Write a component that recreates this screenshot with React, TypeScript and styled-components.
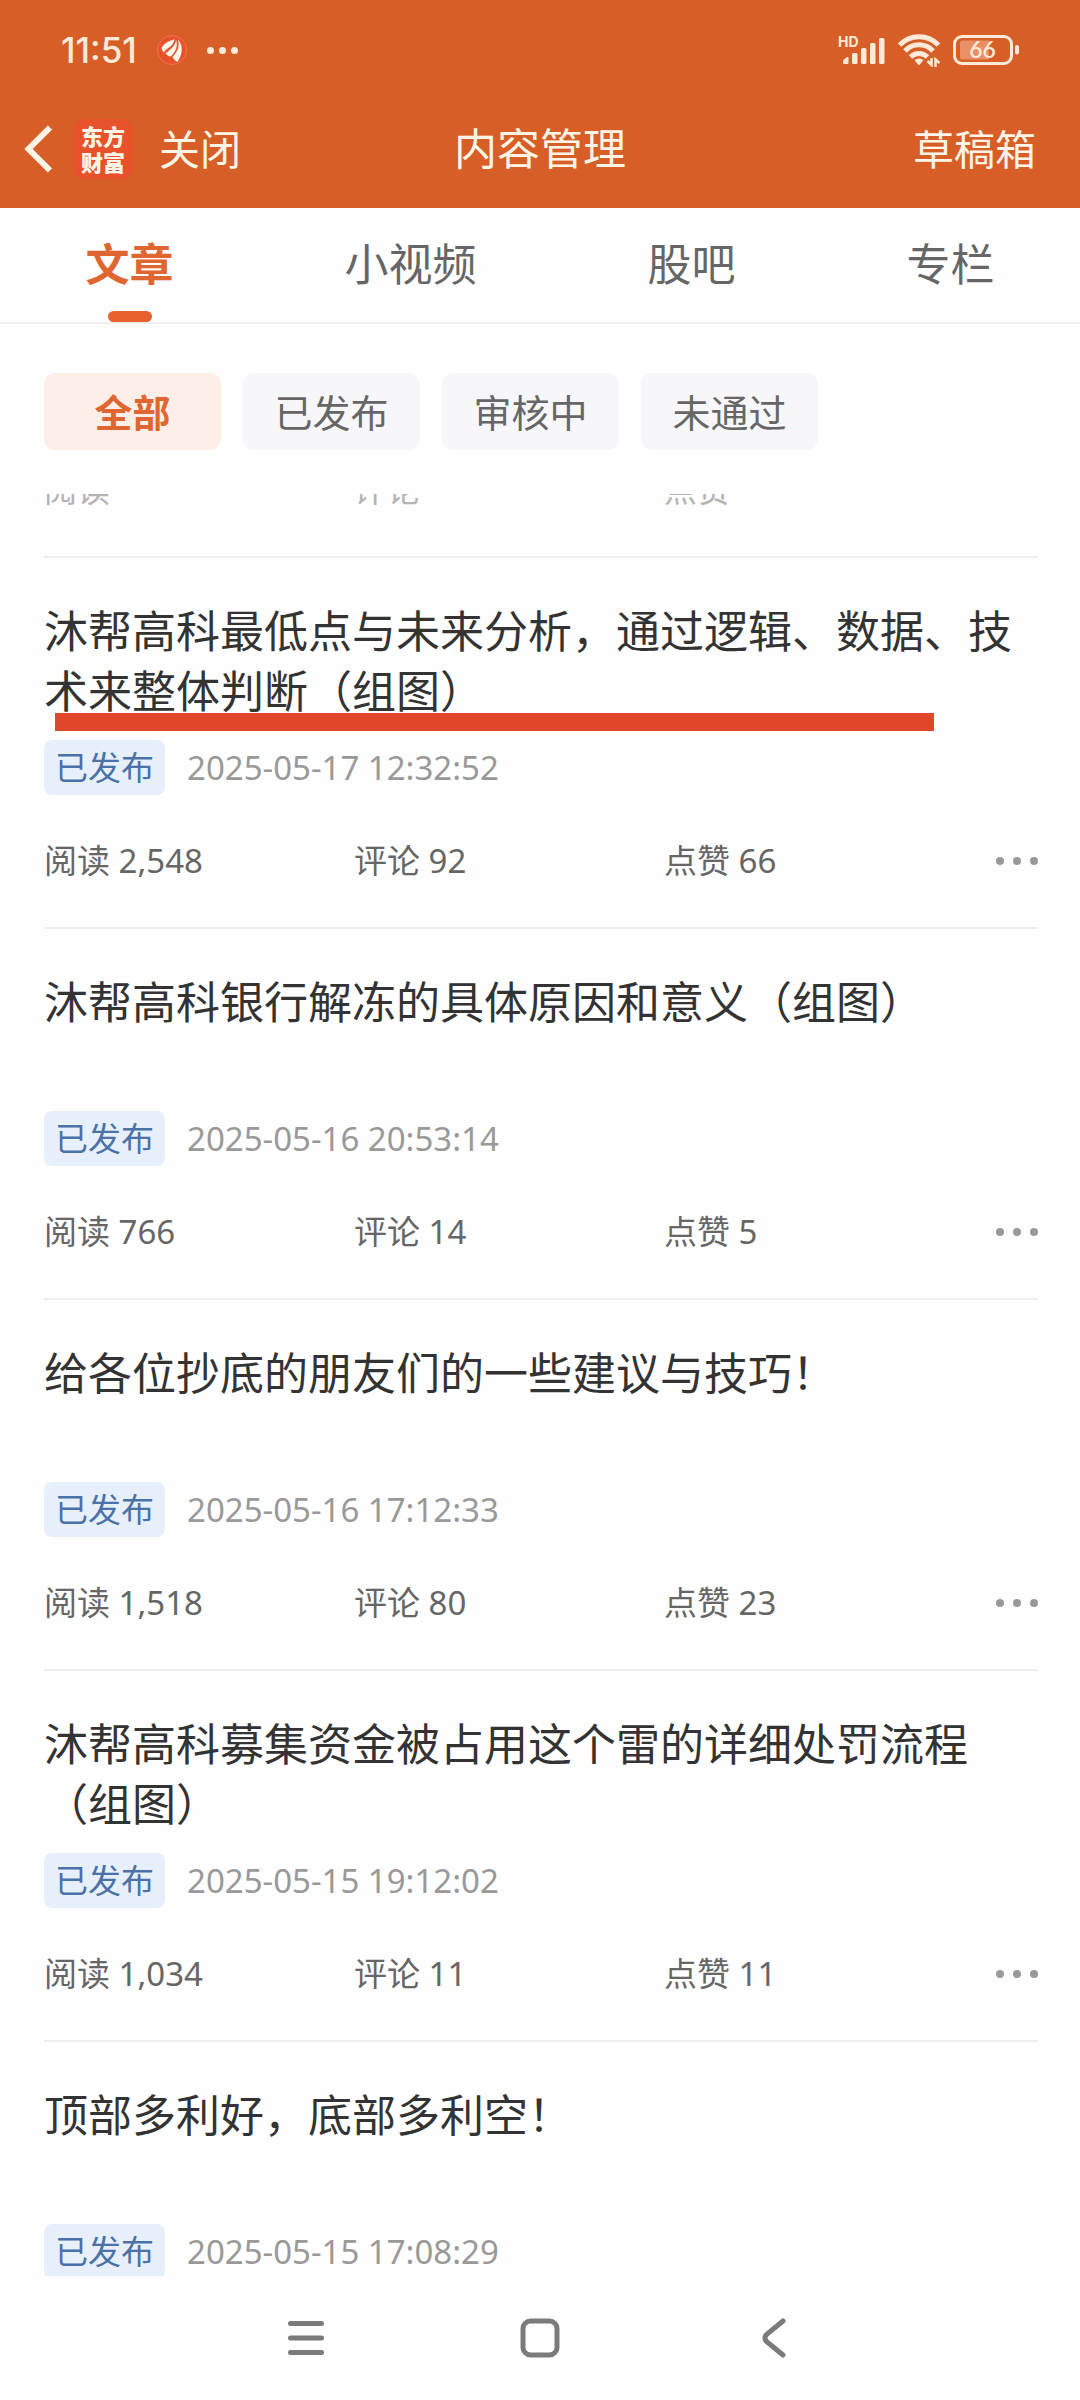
import React from "react";
import styled, { createGlobalStyle } from "styled-components";

const GlobalStyle = createGlobalStyle`
  *, *::before, *::after { box-sizing: border-box; }
  body { margin: 0; background: #fefefe; }
  button {
    margin: 0;
    padding: 0;
    border: 0;
    background: none;
    font: inherit;
    color: inherit;
    cursor: pointer;
  }
  svg { display: block; }
`;

const Page = styled.div`
  display: flex;
  flex-direction: column;
  height: 100vh;
  background: #fefefe;
  color: #333;
  font-family: "Noto Sans", "Noto Sans CJK SC", sans-serif;
  font-size: 33px;
`;

const TopArea = styled.div`
  background: #d75f27;
  color: #fff5e6;
`;

const StatusBar = styled.div`
  display: flex;
  align-items: center;
  justify-content: space-between;
  height: 90px;
  padding: 10px 60px 0 61px;
  color: #ffe9d9;
  font-family: Inter, sans-serif;
`;

const StatusGroup = styled.div<{ $gap: number }>`
  display: flex;
  align-items: center;
  gap: ${(p) => p.$gap}px;
`;

const Clock = styled.span`
  font-size: 35px;
  font-weight: 500;
  line-height: 40px;
`;

const NavBar = styled.header`
  display: grid;
  grid-template-columns: 1fr auto 1fr;
  align-items: center;
  height: 118px;
  padding: 0 24px;
  font-size: 41px;
  line-height: 60px;
`;

const NavLeft = styled.div`
  display: flex;
  align-items: center;
`;

const BackButton = styled.button`
  margin-right: 21px;
`;

const BrandLogo = styled.span`
  display: grid;
  place-content: center;
  width: 60px;
  height: 60px;
  margin-right: 26px;
  border-radius: 12px;
  background: #e8522a;
  font-size: 22px;
  font-weight: 900;
  line-height: 26px;
`;

const PageTitle = styled.h1`
  margin: 0;
  font-size: 43px;
  font-weight: 400;
`;

const DraftsButton = styled.button`
  justify-self: end;
  padding-right: 20px;
`;

const Tabs = styled.nav`
  display: flex;
  justify-content: space-around;
  height: 116px;
  border-bottom: 2px solid #eee;
`;

const Tab = styled.button<{ $active: boolean }>`
  display: flex;
  flex-direction: column;
  align-items: center;
  gap: 16px;
  padding-top: 25px;
  color: ${(p) => (p.$active ? "#df6631" : "#666")};
  font-size: 44px;
  font-weight: ${(p) => (p.$active ? 700 : 400)};
  line-height: 62px;

  &::after {
    content: "";
    width: 44px;
    height: 11px;
    border-radius: 6px;
    background: ${(p) => (p.$active ? "#e8622e" : "transparent")};
  }
`;

const Filters = styled.div`
  display: flex;
  gap: 22px;
  padding: 49px 44px 44px;
`;

const Filter = styled.button<{ $active: boolean }>`
  width: 177px;
  height: 77px;
  border-radius: 11px;
  background: ${(p) => (p.$active ? "#fdeee7" : "#f7f7fa")};
  color: ${(p) => (p.$active ? "#df6631" : "#666")};
  font-size: 38px;
  font-weight: ${(p) => (p.$active ? 700 : 400)};
  line-height: 56px;
`;

const List = styled.main`
  flex: 1;
  min-height: 0;
  padding: 0 42px 0 44px;
  overflow: hidden;
`;

const Item = styled.article`
  position: relative;
  padding: 43px 0;
  border-bottom: 2px solid #eee;
`;

const ScrolledItem = styled.article`
  margin-top: -27px;
  padding-bottom: 43px;
  border-bottom: 2px solid #eee;
  color: #b4b4b4;
`;

const ItemTitle = styled.h2`
  min-height: 120px;
  margin: 0 0 19px;
  font-size: 44px;
  font-weight: 400;
  line-height: 60px;
`;

const Meta = styled.div`
  display: flex;
  align-items: center;
  gap: 22px;
  color: #999;
`;

const Badge = styled.span`
  padding: 0 11px;
  border-radius: 8px;
  background: #e7f0fa;
  color: #4a72a8;
  line-height: 55px;
`;

const Stats = styled.div`
  display: grid;
  grid-template-columns: repeat(3, 1fr) 64px;
  align-items: center;
  line-height: 46px;
`;

const ItemStats = styled(Stats)`
  margin-top: 43px;
  color: #666;
`;

const MoreButton = styled.button`
  justify-self: end;
`;

const Marker = styled.span`
  position: absolute;
  top: 155px;
  left: 11px;
  right: 104px;
  height: 18px;
  background: #e1462b;
`;

const SystemNav = styled.footer`
  display: flex;
  justify-content: center;
  height: 124px;
`;

const SystemButton = styled.button`
  display: grid;
  place-items: center;
  width: 234px;
`;

const AppGlyph = () => (
  <svg width="30" height="30" viewBox="0 0 30 30" aria-hidden="true">
    <circle cx="15" cy="15" r="14.500" fill="#e8512b" stroke="#ee7450" />
    <g fill="#fff6ec">
      <path d="M17.500 4C14 6 8 6.500 4.500 13Q5 16 7 17.500Q9 14 12 12.500C15 10.500 17 8 17.500 4Z" />
      <path d="M19 4.500C19 9.500 14.500 14 8.500 18.500Q10.500 21 13.500 21.500C18 17.500 21.500 12 19 4.500Z" />
      <path d="M21 4.500C23 12 20 17 15.500 22Q17 25.500 20.500 27C24.500 21 27.500 12 21 4.500Z" />
    </g>
  </svg>
);

const Dots = ({ size, pitch, color }: { size: number; pitch: number; color: string }) => (
  <svg width={size + pitch * 2} height={size} aria-hidden="true" fill={color}>
    {[0, 1, 2].map((i) => (
      <circle key={i} cx={size / 2 + i * pitch} cy={size / 2} r={size / 2} />
    ))}
  </svg>
);

const SignalIcon = () => (
  <svg width="48" height="42" viewBox="0 -6 48 42" fill="#ffe9d9" aria-label="HD">
    <text x="1" y="12" fontSize="14" fontWeight="700" fontFamily="Inter, sans-serif">HD</text>
    <path d="M6 26.500q0-1 1-2l3-2.500q1.500-.5 1.500 1V28q0 1-1 1H7q-1 0-1-1Z" />
    <rect x="15" y="18" width="5.500" height="11" rx="1.500" />
    <rect x="24" y="13" width="5.500" height="16" rx="1.500" />
    <rect x="33" y="8" width="5.500" height="21" rx="1.500" />
    <rect x="42" y="3" width="5.500" height="26" rx="1.500" />
  </svg>
);

const WifiIcon = () => (
  <svg width="44" height="34" viewBox="0 0 44 34" fill="none" stroke="#ffe9d9" aria-hidden="true">
    <path d="M2.500 12A27 27 0 0 1 41.500 12" strokeWidth="5" />
    <path d="M8 18A19 19 0 0 1 36 18" strokeWidth="5" />
    <path d="M13.500 24A12 12 0 0 1 30.500 24" strokeWidth="5" />
    <path d="M17.500 27Q22 24 26.500 27L23 31.500Q22 32.500 21 31.500Z" fill="#ffe9d9" stroke="none" />
    <path d="M30.500 28L34.500 32V25M38.500 34V26.500L42.500 30" strokeWidth="2.500" />
  </svg>
);

const BatteryIcon = () => (
  <svg width="67" height="30" viewBox="0 0 67 30" fill="none" aria-label="66%">
    <rect x="1.500" y="1.500" width="57" height="27" rx="7.500" stroke="#ffe9d9" strokeWidth="3" />
    <path d="M7 8Q7 5.500 9.500 5.500H36V24.500H9.500Q7 24.500 7 22Z" fill="#e88f66" />
    <rect x="62" y="10" width="4" height="9.500" rx="2" fill="#ffe9d9" />
    <text x="29.500" y="23" fontSize="23" fontWeight="600" textAnchor="middle" fill="#ffe9d9" fontFamily="Lato, sans-serif">66</text>
  </svg>
);

interface Post {
  title: string;
  time: string;
  reads?: string;
  comments?: string;
  likes?: string;
  marked?: boolean;
}

const posts: Post[] = [
  {
    title: "沐帮高科最低点与未来分析，通过逻辑、数据、技术来整体判断（组图）",
    time: "2025-05-17 12:32:52",
    reads: "2,548",
    comments: "92",
    likes: "66",
    marked: true,
  },
  {
    title: "沐帮高科银行解冻的具体原因和意义（组图）",
    time: "2025-05-16 20:53:14",
    reads: "766",
    comments: "14",
    likes: "5",
  },
  {
    title: "给各位抄底的朋友们的一些建议与技巧！",
    time: "2025-05-16 17:12:33",
    reads: "1,518",
    comments: "80",
    likes: "23",
  },
  {
    title: "沐帮高科募集资金被占用这个雷的详细处罚流程（组图）",
    time: "2025-05-15 19:12:02",
    reads: "1,034",
    comments: "11",
    likes: "11",
  },
  { title: "顶部多利好，底部多利空！", time: "2025-05-15 17:08:29" },
];

const tabs = ["文章", "小视频", "股吧", "专栏"];
const filters = ["全部", "已发布", "审核中", "未通过"];

const PostItem = ({ post }: { post: Post }) => (
  <Item>
    <ItemTitle>{post.title}</ItemTitle>
    {post.marked && <Marker />}
    <Meta>
      <Badge>已发布</Badge>
      <time>{post.time}</time>
    </Meta>
    {post.reads && (
      <ItemStats>
        <span>阅读 {post.reads}</span>
        <span>评论 {post.comments}</span>
        <span>点赞 {post.likes}</span>
        <MoreButton aria-label="更多">
          <Dots size={8} pitch={17} color="#999" />
        </MoreButton>
      </ItemStats>
    )}
  </Item>
);

export default function App() {
  const [tab, setTab] = React.useState(tabs[0]);
  const [filter, setFilter] = React.useState(filters[0]);

  return (
    <Page>
      <GlobalStyle />
      <TopArea>
        <StatusBar>
          <StatusGroup $gap={20}>
            <Clock>11:51</Clock>
            <AppGlyph />
            <Dots size={7} pitch={12} color="#ffe9d9" />
          </StatusGroup>
          <StatusGroup $gap={12}>
            <SignalIcon />
            <WifiIcon />
            <BatteryIcon />
          </StatusGroup>
        </StatusBar>
        <NavBar>
          <NavLeft>
            <BackButton aria-label="返回">
              <svg width="28" height="48" viewBox="0 0 28 48" fill="none" stroke="#fff5e6" strokeWidth="6">
                <path d="M26 2.500L4.500 24L26 45.500" />
              </svg>
            </BackButton>
            <BrandLogo>
              <span>东方</span>
              <span>财富</span>
            </BrandLogo>
            <button>关闭</button>
          </NavLeft>
          <PageTitle>内容管理</PageTitle>
          <DraftsButton>草稿箱</DraftsButton>
        </NavBar>
      </TopArea>

      <Tabs>
        {tabs.map((name) => (
          <Tab key={name} $active={name === tab} onClick={() => setTab(name)}>
            {name}
          </Tab>
        ))}
      </Tabs>

      <Filters>
        {filters.map((name) => (
          <Filter key={name} $active={name === filter} onClick={() => setFilter(name)}>
            {name}
          </Filter>
        ))}
      </Filters>

      <List>
        <ScrolledItem>
          <Stats>
            <span>阅读</span>
            <span>评论</span>
            <span>点赞</span>
          </Stats>
        </ScrolledItem>
        {posts.map((post) => (
          <PostItem key={post.time} post={post} />
        ))}
      </List>

      <SystemNav>
        <SystemButton aria-label="最近任务">
          <svg width="38" height="36" viewBox="0 0 38 36" stroke="#7b7b7b" strokeWidth="5" strokeLinecap="round">
            <path d="M3.500 3.500H34.500M3.500 18H34.500M3.500 32.500H34.500" />
          </svg>
        </SystemButton>
        <SystemButton aria-label="主屏幕">
          <svg width="40" height="40" viewBox="0 0 40 40" fill="none" stroke="#7b7b7b" strokeWidth="5">
            <rect x="3" y="3" width="34" height="34" rx="7.500" />
          </svg>
        </SystemButton>
        <SystemButton aria-label="返回上一级">
          <svg width="24" height="40" viewBox="0 0 24 40" fill="none" stroke="#7b7b7b" strokeWidth="5" strokeLinecap="round">
            <path d="M21 3L4.500 16.500Q1.500 20 4.500 23.500L21 37" />
          </svg>
        </SystemButton>
      </SystemNav>
    </Page>
  );
}
